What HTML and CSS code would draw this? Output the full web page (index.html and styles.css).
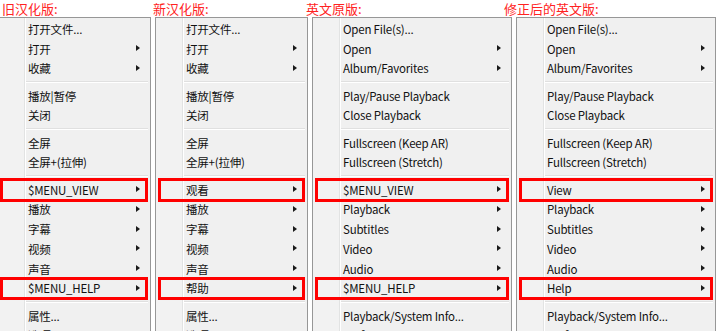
FILE: index.html
```html
<!DOCTYPE html>
<html lang="zh-CN">
<head>
  <meta charset="UTF-8">
  <title>菜单对比</title>
  <link rel="stylesheet" href="styles.css">
</head>
<body>
  <div class="labels">
    <div class="label">旧汉化版:</div>
    <div class="label">新汉化版:</div>
    <div class="label">英文原版:</div>
    <div class="label">修正后的英文版:</div>
  </div>

  <div class="menus">
    <ul class="menu">
      <li class="item">打开文件...</li>
      <li class="item sub">打开</li>
      <li class="item sub">收藏</li>
      <li class="sep"></li>
      <li class="item">播放|暂停</li>
      <li class="item">关闭</li>
      <li class="sep"></li>
      <li class="item">全屏</li>
      <li class="item">全屏+(拉伸)</li>
      <li class="sep"></li>
      <li class="item sub mark">$MENU_VIEW</li>
      <li class="item sub">播放</li>
      <li class="item sub">字幕</li>
      <li class="item sub">视频</li>
      <li class="item sub">声音</li>
      <li class="item sub mark">$MENU_HELP</li>
      <li class="sep"></li>
      <li class="item">属性...</li>
      <li class="item">选项...</li>
    </ul>

    <ul class="menu">
      <li class="item">打开文件...</li>
      <li class="item sub">打开</li>
      <li class="item sub">收藏</li>
      <li class="sep"></li>
      <li class="item">播放|暂停</li>
      <li class="item">关闭</li>
      <li class="sep"></li>
      <li class="item">全屏</li>
      <li class="item">全屏+(拉伸)</li>
      <li class="sep"></li>
      <li class="item sub mark">观看</li>
      <li class="item sub">播放</li>
      <li class="item sub">字幕</li>
      <li class="item sub">视频</li>
      <li class="item sub">声音</li>
      <li class="item sub mark">帮助</li>
      <li class="sep"></li>
      <li class="item">属性...</li>
      <li class="item">选项...</li>
    </ul>

    <ul class="menu">
      <li class="item">Open File(s)...</li>
      <li class="item sub">Open</li>
      <li class="item sub">Album/Favorites</li>
      <li class="sep"></li>
      <li class="item">Play/Pause Playback</li>
      <li class="item">Close Playback</li>
      <li class="sep"></li>
      <li class="item">Fullscreen (Keep AR)</li>
      <li class="item">Fullscreen (Stretch)</li>
      <li class="sep"></li>
      <li class="item sub mark">$MENU_VIEW</li>
      <li class="item sub">Playback</li>
      <li class="item sub">Subtitles</li>
      <li class="item sub">Video</li>
      <li class="item sub">Audio</li>
      <li class="item sub mark">$MENU_HELP</li>
      <li class="sep"></li>
      <li class="item">Playback/System Info...</li>
      <li class="item">Preferences...</li>
    </ul>

    <ul class="menu">
      <li class="item">Open File(s)...</li>
      <li class="item sub">Open</li>
      <li class="item sub">Album/Favorites</li>
      <li class="sep"></li>
      <li class="item">Play/Pause Playback</li>
      <li class="item">Close Playback</li>
      <li class="sep"></li>
      <li class="item">Fullscreen (Keep AR)</li>
      <li class="item">Fullscreen (Stretch)</li>
      <li class="sep"></li>
      <li class="item sub mark">View</li>
      <li class="item sub">Playback</li>
      <li class="item sub">Subtitles</li>
      <li class="item sub">Video</li>
      <li class="item sub">Audio</li>
      <li class="item sub mark">Help</li>
      <li class="sep"></li>
      <li class="item">Playback/System Info...</li>
      <li class="item">Preferences...</li>
    </ul>
  </div>
</body>
</html>
```

FILE: styles.css
```css
html, body {
  margin: 0;
  height: 100%;
  overflow: hidden;
  background: #fff;
}

body {
  font-family: "Noto Sans CJK SC", "Noto Sans", sans-serif;
}

.labels {
  display: grid;
  grid-template-columns: 151px 153px 198px 1fr;
  padding-left: 2px;
  height: 17px;
}

.label {
  color: #f22;
  font-size: 13px;
  line-height: 17px;
  white-space: nowrap;
}

.menus {
  display: grid;
  grid-template-columns: 154px 153px 200px 200px;
  gap: 4px;
  margin-left: -3px;
}

.menu {
  list-style: none;
  margin: 0;
  padding: 1px 2px 0;
  border: 1px solid #979797;
  border-bottom: none;
  height: 340px;
  background: linear-gradient(90deg, #f2f2f2 0 26px, #e2e3e3 26px 27px, #fff 27px 28px, #f0f0f0 28px);
  background-origin: padding-box;
  font-size: 11.5px;
  letter-spacing: -0.2px;
  color: #111;
}

.item {
  position: relative;
  display: flex;
  align-items: center;
  height: 19.75px;
  padding: 0 8px 0 28px;
  white-space: nowrap;
}

.sub::before {
  content: "";
  position: absolute;
  right: 8px;
  top: 50%;
  margin-top: -3.5px;
  border-top: 3.5px solid transparent;
  border-bottom: 3.5px solid transparent;
  border-left: 4px solid #1a1a1a;
}

.mark::after {
  content: "";
  position: absolute;
  top: -2px;
  bottom: -2px;
  left: 0;
  right: 0;
  border: 3px solid #f00;
}

.sep {
  height: 7.5px;
  margin-left: 26px;
  background: linear-gradient(#f0f0f0 0 3px, #e0e0e0 3px 4px, #fff 4px 5px, #f0f0f0 5px);
}
```
